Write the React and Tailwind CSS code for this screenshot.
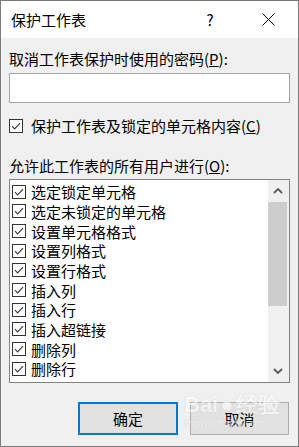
const ITEMS = [
  '选定锁定单元格',
  '选定未锁定的单元格',
  '设置单元格格式',
  '设置列格式',
  '设置行格式',
  '插入列',
  '插入行',
  '插入超链接',
  '删除列',
  '删除行',
];

function Check({ className = '' }) {
  return (
    <span className={`flex h-[14px] w-[14px] shrink-0 items-center justify-center border border-[#333333] bg-white ${className}`}>
      <svg width="12" height="12" viewBox="0 0 12 12" fill="none">
        <path d="M2 6.2 L4.6 8.8 L10 3.2" stroke="#3c3c3c" strokeWidth="1.2" />
      </svg>
    </span>
  );
}

function Chevron({ down }) {
  return (
    <svg width="10" height="6" viewBox="0 0 10 6" fill="none">
      <path d={down ? 'M1 1 L5 5 L9 1' : 'M1 5 L5 1 L9 5'} stroke="#5a5a5a" strokeWidth="1.8" />
    </svg>
  );
}

export default function App() {
  return (
    <div className="flex h-[447px] w-[299px] flex-col border border-[#7a7a7a] bg-[#f0f0f0] font-['Noto_Sans_CJK_SC',sans-serif] text-[15px] text-black">
      <div className="flex h-[37px] shrink-0 items-center bg-white pl-[10px]">
        <span className="flex-1 leading-[20px]">保护工作表</span>
        <span className="w-[20px] text-center leading-[20px]">?</span>
        <span className="ml-[41px] mr-[23px] flex h-[20px] w-[14px] items-center justify-center">
          <svg width="13" height="13" viewBox="0 0 13 13" fill="none">
            <path d="M0.5 0.5 L12.5 12.5 M12.5 0.5 L0.5 12.5" stroke="#000" strokeWidth="1" />
          </svg>
        </span>
      </div>

      <div className="flex flex-1 flex-col px-[8px]">
        <div className="mt-[11px] leading-[20px]">
          取消工作表保护时使用的密码(<span className="underline">P</span>):
        </div>
        <div className="mt-[4px] h-[30px] border border-[#a3a3a3] bg-white" />

        <div className="mt-[13px] flex h-[20px] items-center gap-[8px]">
          <Check />
          <span className="leading-[20px]">
            保护工作表及锁定的单元格内容(<span className="underline">C</span>)
          </span>
        </div>

        <div className="mt-[20px] leading-[20px]">
          允许此工作表的所有用户进行(<span className="underline">O</span>):
        </div>

        <div className="mt-[3px] flex h-[204px] border border-[#828282] bg-white">
          <div className="flex-1 overflow-hidden pl-[2px] pt-[2px]">
            {ITEMS.map((item) => (
              <div key={item} className="flex h-[19.67px] items-center gap-[5px]">
                <Check />
                <span className="whitespace-nowrap leading-[19px]">{item}</span>
              </div>
            ))}
          </div>
          <div className="flex w-[21px] flex-col bg-[#f0f0f0]">
            <div className="flex h-[22px] items-center justify-center pr-[2px]">
              <Chevron />
            </div>
            <div className="h-[104px] w-[19px] bg-[#cdcdcd]" />
            <div className="flex-1" />
            <div className="flex h-[22px] items-center justify-center pr-[2px]">
              <Chevron down />
            </div>
          </div>
        </div>

        <div className="relative mt-[19px] flex justify-end gap-[12px] pr-[1px]">
          <button className="h-[33px] w-[100px] border-2 border-[#0078d7] bg-[#e1e1e1] leading-[20px]">确定</button>
          <button className="h-[33px] w-[99px] border border-[#adadad] bg-[#e1e1e1] leading-[20px]">取消</button>
          <div className="pointer-events-none absolute left-[175px] top-[-10px] flex flex-col items-start text-white opacity-60 [text-shadow:0_0_1px_#b0b0b0]">
            <span className="font-['Liberation_Sans',sans-serif] text-[22px] font-bold leading-[26px]">
              Bai<span className="mx-[2px]">●</span>经验
            </span>
            <span className="font-['Liberation_Sans',sans-serif] text-[10px] leading-[12px]">jingyan.baidu.com</span>
          </div>
        </div>
      </div>
    </div>
  );
}
